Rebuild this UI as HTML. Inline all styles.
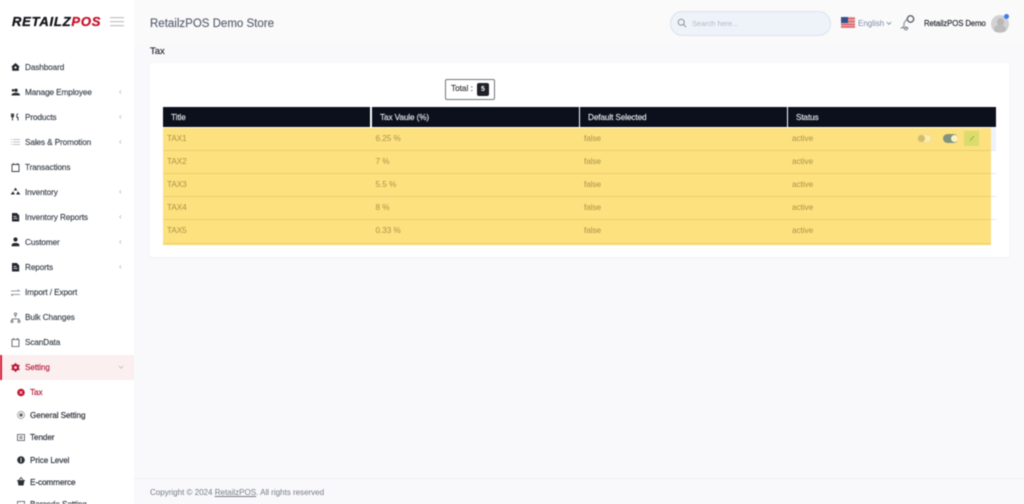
<!DOCTYPE html>
<html lang="en"><head><meta charset="utf-8"><title>Tax</title>
<style>
*{box-sizing:border-box;margin:0;padding:0}
html,body{width:1024px;height:504px;overflow:hidden;background:#f9f9fb;font-family:"Liberation Sans",sans-serif}
.a{position:absolute;white-space:nowrap}
#root{position:relative;width:1024px;height:504px;overflow:hidden;filter:blur(.45px)}
#side{left:0;top:0;width:134px;height:504px;background:#fff}
.m{position:absolute;left:25px;margin-top:1px;font-size:8.2px;letter-spacing:-.1px;line-height:12px;color:#3a424d;white-space:nowrap;-webkit-text-stroke:.15px currentColor}
.s{position:absolute;left:30px;margin-top:1px;font-size:8.2px;letter-spacing:-.1px;line-height:12px;color:#30353d;white-space:nowrap;-webkit-text-stroke:.2px currentColor}
.i{position:absolute}
.c{position:absolute;left:119px;font-size:8px;line-height:10px;color:#a5aab1}
.th{position:absolute;top:107px;height:20px;background:#0b101c;color:#e8e8ea;font-size:8.2px;letter-spacing:-.1px;line-height:21px;padding-left:8px;-webkit-text-stroke:.15px currentColor}
.td{position:absolute;margin-top:1px;font-size:8.2px;letter-spacing:-.05px;line-height:12px;color:#ab9248;white-space:nowrap}
.ln{position:absolute;left:163px;width:828px;height:1px;background:#eccf6e}
</style></head><body><div id="root">

<div id="side" class="a"></div>
<div class="a" style="left:12px;top:14px;font-size:13px;line-height:16px;font-weight:700;font-style:italic;letter-spacing:.78px;color:#14141a;-webkit-text-stroke:.35px currentColor">RETAILZ<span style="color:#c8142e">POS</span></div>
<div class="a" style="left:110px;top:17px;width:14px;height:1px;background:#c6c6c6;box-shadow:0 .5px 0 #ddd"></div>
<div class="a" style="left:110px;top:21px;width:14px;height:1px;background:#c6c6c6;box-shadow:0 .5px 0 #ddd"></div>
<div class="a" style="left:110px;top:25px;width:14px;height:1px;background:#c6c6c6;box-shadow:0 .5px 0 #ddd"></div>

<div class="a" style="left:0;top:355px;width:134px;height:25px;background:#fbeff0"></div>
<div class="a" style="left:0;top:355px;width:2px;height:25px;background:#d8142f"></div>

<!-- icons -->
<svg class="i" style="left:0;top:0" width="60" height="504" viewBox="0 0 60 504">
<path d="M15.500 63L20 67H18.800V70.800H12.200V67H11Z M14.600 66.500h1.800v2h-1.800z" fill="#23272e" fill-rule="evenodd"/>
<path d="M16 88.500a1.800 1.800 0 1 1-.01 0zM11.500 95.500c0-2.200 2-2.800 4.500-2.800s4 .6 4 2.800z M13 89a1.300 1.300 0 1 1-.01 0z" fill="#2b2f36"/>
<path d="M12.500 113.500v7M11.400 113.500v2.500q0 1 1.100 1t1.100-1v-2.500M18 113.500c-1.500 1-1.500 3-1 4h1v3" stroke="#23272e" stroke-width=".9" fill="none"/>
<path d="M13 139.500h7M13 142h7M13 144.500h7M11 139.500h1M11 142h1M11 144.500h1" stroke="#c0c3c8" stroke-width=".9"/>
<path d="M12 164.500h7v7h-7zM13.500 163v2M17.500 163v2" stroke="#3b3f46" stroke-width=".9" fill="none"/>
<path d="M15.500 187.500l1.800 3h-3.600zM13 191.300l1.900 3.200h-4.300zM18 191.300l2.400 3.200h-4.300z" fill="#2b2f36"/>
<path d="M12 213h4.800l2.400 2.400v6.100H12z" fill="#23272e"/><path d="M13.500 216.500h3M13.500 218.500h4" stroke="#fff" stroke-width=".8"/>
<circle cx="15.500" cy="239.500" r="2.100" fill="#23272e"/><path d="M11.500 246.300c0-2.800 1.500-3.300 4-3.300s4 .5 4 3.300z" fill="#23272e"/>
<path d="M12 263h4.800l2.400 2.400v6.100H12z" fill="#23272e"/><path d="M13.500 266.500h3M13.500 268.500h4" stroke="#fff" stroke-width=".8"/>
<path d="M11 291h9M11 294.500h9M17.500 289.500l2 1.500M13 296l-2-1.500" stroke="#7a8088" stroke-width=".7" fill="none"/>
<path d="M15.500 314.500v3M12 321v-2h7v2" stroke="#555a62" stroke-width=".7" fill="none"/><circle cx="15.500" cy="314" r="1.200" fill="none" stroke="#555a62" stroke-width=".7"/><circle cx="12" cy="321.500" r="1.100" fill="none" stroke="#555a62" stroke-width=".7"/><circle cx="19" cy="321.500" r="1.100" fill="none" stroke="#555a62" stroke-width=".7"/>
<path d="M12 339.500h7v7h-7zM13.500 338v2M17.500 338v2" stroke="#4a4e55" stroke-width=".8" fill="none"/>
<circle cx="15.500" cy="367.500" r="2.600" fill="none" stroke="#b8142f" stroke-width="2"/><path d="M15.500 363v9M11.500 365.200l8 4.600M11.500 369.800l8-4.600" stroke="#b8142f" stroke-width="1.200"/><circle cx="15.500" cy="367.500" r="1.300" fill="#fdf0f1"/>
<circle cx="21" cy="392.500" r="3.800" fill="#c0142f"/><path d="M19.600 391.100l2.800 2.800M22.400 391.100l-2.800 2.800" stroke="#fde" stroke-width=".8"/>
<circle cx="21" cy="415" r="3.500" fill="none" stroke="#888" stroke-width=".7"/><circle cx="21" cy="415" r="1.800" fill="#666"/>
<path d="M17.500 434.500h7v6h-7z" fill="none" stroke="#4a4e55" stroke-width=".8"/><circle cx="21" cy="437.500" r="1.200" fill="none" stroke="#4a4e55" stroke-width=".7"/>
<circle cx="21" cy="460" r="3.800" fill="#2b2f36"/><path d="M21 457.800v4.400" stroke="#ddd" stroke-width="1"/>
<path d="M17.500 480.500h7l-1 5h-5z" fill="#2b2f36"/><path d="M19 480l2-2.500 2 2.500M17 480.500h8" stroke="#2b2f36" stroke-width=".8" fill="none"/>
<path d="M17.500 501.500h7v6h-7z" fill="none" stroke="#4a4e55" stroke-width=".8"/>
</svg>

<div class="m" style="top:61px">Dashboard</div>
<div class="m" style="top:86px">Manage Employee</div><div class="c" style="top:87px">‹</div>
<div class="m" style="top:111px">Products</div><div class="c" style="top:112px">‹</div>
<div class="m" style="top:136px">Sales &amp; Promotion</div><div class="c" style="top:137px">‹</div>
<div class="m" style="top:161px">Transactions</div>
<div class="m" style="top:186px">Inventory</div><div class="c" style="top:187px">‹</div>
<div class="m" style="top:211px">Inventory Reports</div><div class="c" style="top:212px">‹</div>
<div class="m" style="top:236px">Customer</div><div class="c" style="top:237px">‹</div>
<div class="m" style="top:261px">Reports</div><div class="c" style="top:262px">‹</div>
<div class="m" style="top:286px">Import / Export</div>
<div class="m" style="top:311px">Bulk Changes</div>
<div class="m" style="top:336px">ScanData</div>

<div class="m" style="top:361px;color:#b81d38">Setting</div>
<svg class="i" style="left:118px;top:365px" width="6" height="5"><path d="M.8 1 L3 3.300 5.200 1" stroke="#b5b5b8" stroke-width=".7" fill="none"/></svg>

<div class="s" style="top:386px;color:#b81d38">Tax</div>
<div class="s" style="top:408.500px">General Setting</div>
<div class="s" style="top:431px">Tender</div>
<div class="s" style="top:453.500px">Price Level</div>
<div class="s" style="top:475.500px">E-commerce</div>
<div class="s" style="top:498px">Barcode Setting</div>

<!-- header -->
<div class="a" style="left:134px;top:0;width:890px;height:44px;background:#fafafb"></div>
<div class="a" style="left:150px;top:16px;font-size:11.500px;line-height:16px;color:#5a6270;-webkit-text-stroke:.15px currentColor">RetailzPOS Demo Store</div>
<div class="a" style="left:670px;top:11px;width:161px;height:25px;border-radius:13px;background:#eef3f9;border:1px solid #d8e3ee"></div>
<svg class="i" style="left:677px;top:18px" width="10" height="10"><circle cx="4.200" cy="4.200" r="3" fill="none" stroke="#8b9199" stroke-width="1"/><path d="M6.500 6.500L9 9" stroke="#8b9199" stroke-width="1"/></svg>
<div class="a" style="left:692px;top:17px;font-size:7.400px;line-height:13px;color:#b3bac3">Search here...</div>
<svg class="i" style="left:841px;top:17px" width="14" height="11" viewBox="0 0 14 11"><rect width="14" height="11" fill="#e8a3a3"/><path d="M0 1.500h14M0 4.500h14M0 7.500h14M0 10h14" stroke="#d9565f" stroke-width="1"/><rect width="7" height="6" fill="#34508f"/></svg>
<div class="a" style="left:858px;top:18px;font-size:8px;line-height:12px;color:#7d8ba3">English</div>
<svg class="i" style="left:886px;top:21px" width="6" height="5"><path d="M.8 1 L3 3.300 5.200 1" stroke="#7d8ba3" stroke-width=".9" fill="none"/></svg>
<svg class="i" style="left:900px;top:14px" width="16" height="17" viewBox="0 0 16 17"><path d="M7 5l-3 4v3l-2.500 2h7" fill="none" stroke="#8b9098" stroke-width="1.100"/><circle cx="6" cy="14.500" r="1.500" fill="none" stroke="#8b9098"/><circle cx="10.500" cy="5" r="3.200" fill="none" stroke="#666b73" stroke-width="1.500"/></svg>
<div class="a" style="left:924px;top:18px;font-size:7.800px;letter-spacing:-.1px;line-height:12px;color:#2e3238;-webkit-text-stroke:.2px currentColor">RetailzPOS Demo</div>
<div class="a" style="left:991px;top:15px;width:18px;height:18px;border-radius:50%;background:#d2d2d2"></div>
<div class="a" style="left:997px;top:18px;width:7px;height:8px;border-radius:50%;background:#b8b8b8"></div>
<div class="a" style="left:994px;top:25px;width:12px;height:7px;border-radius:6px 6px 3px 3px;background:#bcbcbc"></div>
<div class="a" style="left:1004px;top:14px;width:5px;height:5px;border-radius:50%;background:#3b7df0"></div>

<!-- page -->
<div class="a" style="left:150px;top:45px;font-size:9.500px;line-height:13px;color:#23272e;-webkit-text-stroke:.15px currentColor">Tax</div>
<div class="a" style="left:150px;top:63px;width:859px;height:194px;background:#fff;border-radius:3px;box-shadow:0 1px 3px rgba(120,130,170,.07)"></div>
<div class="a" style="left:445px;top:79px;width:50px;height:21px;border:1px solid #70757c;border-radius:2px;background:#fff"></div>
<div class="a" style="left:451px;top:83px;font-size:8.200px;line-height:12px;color:#333;-webkit-text-stroke:.15px currentColor">Total :</div>
<div class="a" style="left:477px;top:83px;width:12px;height:13px;border-radius:2px;background:#1e2128;color:#fff;font-size:7px;font-weight:700;line-height:13px;text-align:center">5</div>

<div class="th" style="left:163px;width:207px">Title</div>
<div class="th" style="left:372px;width:207px">Tax Vaule (%)</div>
<div class="th" style="left:580px;width:207px">Default Selected</div>
<div class="th" style="left:788px;width:208px">Status</div>

<!-- row background -->
<div class="a" style="left:991px;top:128px;width:5px;height:22px;background:#eef3fa"></div>
<div class="a" style="left:991px;top:150px;width:5px;height:1px;background:#e8e8e8"></div>
<div class="a" style="left:991px;top:173px;width:5px;height:1px;background:#e8e8e8"></div>
<div class="a" style="left:991px;top:196px;width:5px;height:1px;background:#e8e8e8"></div>
<div class="a" style="left:991px;top:219px;width:5px;height:1px;background:#e8e8e8"></div>
<div class="a" style="left:163px;top:128px;width:828px;height:116px;background:#fce17e"></div>
<div class="a" style="left:163px;top:243px;width:828px;height:2px;background:#f6d56c"></div>
<div class="ln" style="top:150px"></div><div class="ln" style="top:173px"></div><div class="ln" style="top:196px"></div><div class="ln" style="top:219px"></div>

<div class="td" style="left:167px;top:132px">TAX1</div><div class="td" style="left:375.500px;top:132px">6.25 %</div><div class="td" style="left:584px;top:132px">false</div><div class="td" style="left:792px;top:132px">active</div>
<div class="td" style="left:167px;top:155px">TAX2</div><div class="td" style="left:375.500px;top:155px">7 %</div><div class="td" style="left:584px;top:155px">false</div><div class="td" style="left:792px;top:155px">active</div>
<div class="td" style="left:167px;top:178px">TAX3</div><div class="td" style="left:375.500px;top:178px">5.5 %</div><div class="td" style="left:584px;top:178px">false</div><div class="td" style="left:792px;top:178px">active</div>
<div class="td" style="left:167px;top:201px">TAX4</div><div class="td" style="left:375.500px;top:201px">8 %</div><div class="td" style="left:584px;top:201px">false</div><div class="td" style="left:792px;top:201px">active</div>
<div class="td" style="left:167px;top:224px">TAX5</div><div class="td" style="left:375.500px;top:224px">0.33 %</div><div class="td" style="left:584px;top:224px">false</div><div class="td" style="left:792px;top:224px">active</div>

<!-- toggles -->
<div class="a" style="left:917px;top:134px;width:15px;height:9px;border-radius:5px;background:#fdeaae;border:1px solid #f3da88"></div>
<div class="a" style="left:918px;top:135px;width:7px;height:7px;border-radius:50%;background:#d3bb6c"></div>
<div class="a" style="left:943px;top:134px;width:15px;height:9px;border-radius:5px;background:#7f9480"></div>
<div class="a" style="left:950.500px;top:135px;width:7px;height:7px;border-radius:50%;background:#fdf1c0"></div>
<div class="a" style="left:964px;top:131px;width:15px;height:15px;background:#dcdc6e"></div>
<svg class="i" style="left:968px;top:134px" width="8" height="9" viewBox="0 0 8 9"><path d="M1.500 7.500l.5-2L5.500 1.500l1 1L3 6.500z" fill="#a8c43c"/></svg>

<!-- footer -->
<div class="a" style="left:134px;top:478px;width:890px;height:1px;background:#f0f0f2"></div>
<div class="a" style="left:150px;top:487px;font-size:8.100px;letter-spacing:-.04px;line-height:12px;color:#767b83">Copyright © 2024 <span style="text-decoration:underline">RetailzPOS</span>. All rights reserved</div>
</div></body></html>
